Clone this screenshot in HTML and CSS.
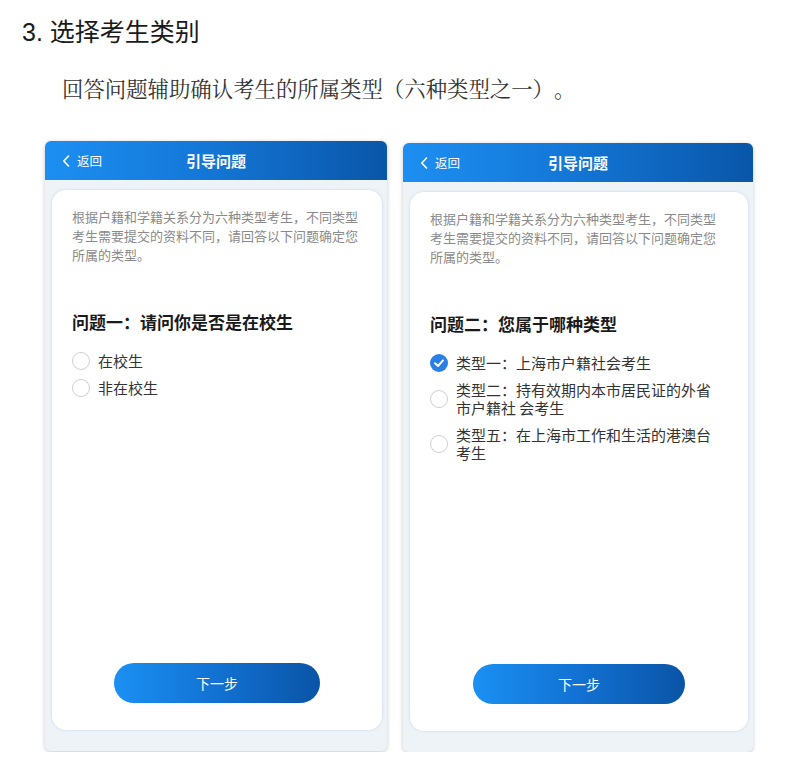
FILE: index.html
```html
<!DOCTYPE html>
<html lang="zh-CN">
<head>
<meta charset="utf-8">
<title>选择考生类别</title>
<link rel="stylesheet" href="styles.css">
</head>
<body>
<h1 class="title">3. 选择考生类别</h1>
<p class="lead">回答问题辅助确认考生的所属类型（六种类型之一）。</p>
<div class="panels">
  <div class="panel">
    <div class="header">
      <span class="back"><svg class="chev" viewBox="0 0 8 12" width="8" height="12"><path d="M6.5 1 L1.8 6 L6.5 11" fill="none" stroke="#fff" stroke-width="1.6" stroke-linecap="round" stroke-linejoin="round"/></svg>返回</span>
      <span class="htitle">引导问题</span>
    </div>
    <div class="card">
      <p class="desc">根据户籍和学籍关系分为六种类型考生，不同类型考生需要提交的资料不同，请回答以下问题确定您所属的类型。</p>
      <h2 class="question">问题一：请问你是否是在校生</h2>
      <ul class="options">
        <li class="option"><span class="radio"></span><span class="otext">在校生</span></li>
        <li class="option"><span class="radio"></span><span class="otext">非在校生</span></li>
      </ul>
      <button class="next">下一步</button>
    </div>
  </div>
  <div class="panel panel-right">
    <div class="header">
      <span class="back"><svg class="chev" viewBox="0 0 8 12" width="8" height="12"><path d="M6.5 1 L1.8 6 L6.5 11" fill="none" stroke="#fff" stroke-width="1.6" stroke-linecap="round" stroke-linejoin="round"/></svg>返回</span>
      <span class="htitle">引导问题</span>
    </div>
    <div class="card">
      <p class="desc">根据户籍和学籍关系分为六种类型考生，不同类型考生需要提交的资料不同，请回答以下问题确定您所属的类型。</p>
      <h2 class="question">问题二：您属于哪种类型</h2>
      <ul class="options">
        <li class="option"><span class="radio checked"><svg viewBox="0 0 18 18" width="18" height="18"><path d="M5 9.2 L8 12 L13 6.4" fill="none" stroke="#fff" stroke-width="2" stroke-linecap="round" stroke-linejoin="round"/></svg></span><span class="otext">类型一：上海市户籍社会考生</span></li>
        <li class="option"><span class="radio"></span><span class="otext">类型二：持有效期内本市居民证的外省市户籍社 会考生</span></li>
        <li class="option"><span class="radio"></span><span class="otext">类型五：在上海市工作和生活的港澳台考生</span></li>
      </ul>
      <button class="next">下一步</button>
    </div>
  </div>
</div>
</body>
</html>
```
FILE: styles.css
```css
* { box-sizing: border-box; }
body {
  margin: 0;
  background: #ffffff;
  font-family: "Liberation Sans", "Noto Sans CJK SC", sans-serif;
  color: #222;
  text-spacing-trim: space-all;
}
.title {
  margin: 0;
  padding: 14px 0 0 22px;
  font-size: 25px;
  line-height: 36px;
  font-weight: normal;
  color: #1a1a1a;
}
.lead {
  margin: 25px 0 0 62px;
  font-family: "Liberation Serif", "Noto Serif CJK SC", "Noto Sans CJK SC", serif;
  font-size: 21.4px;
  line-height: 30px;
  color: #333;
  text-spacing-trim: space-all;
}
.panels {
  display: flex;
  align-items: flex-start;
  gap: 16px;
  margin-top: 36px;
  padding-left: 45px;
}
.panel {
  width: 342px;
  height: 610px;
  background: #eef3f8;
  border-radius: 6px;
  box-shadow: 0 1px 4px rgba(0, 0, 0, 0.22);
  display: flex;
  flex-direction: column;
  overflow: hidden;
}
.panel-right {
  width: 350px;
  height: 609px;
  margin-top: 2px;
}
.header {
  height: 39px;
  flex: none;
  background: linear-gradient(90deg, #1d8ff2 0%, #1478d8 45%, #0a56a8 100%);
  color: #fff;
  display: flex;
  align-items: center;
  position: relative;
  padding-left: 17px;
}
.back {
  display: flex;
  align-items: center;
  gap: 7px;
  font-size: 12.5px;
  font-family: "Noto Sans CJK SC", sans-serif;
}
.chev { display: block; }
.htitle {
  position: absolute;
  left: 0;
  right: 0;
  text-align: center;
  font-size: 15px;
  font-weight: bold;
  font-family: "Noto Sans CJK SC", sans-serif;
  pointer-events: none;
}
.card {
  flex: 1;
  margin: 10px 5px 21px 7px;
  background: #fff;
  border-radius: 14px;
  box-shadow: 0 0 3px rgba(120, 160, 210, 0.35);
  padding: 17px 20px 27px 20px;
  display: flex;
  flex-direction: column;
  font-family: "Noto Sans CJK SC", sans-serif;
}
.desc {
  margin: 0;
  max-width: 288px;
  font-size: 13px;
  line-height: 19px;
  color: #8a8a8a;
}
.question {
  margin: 46px 0 0 0;
  font-size: 17px;
  line-height: 24px;
  font-weight: bold;
  color: #1a1a1a;
}
.options {
  list-style: none;
  margin: 18px 0 0 0;
  padding: 0 12px 0 0;
  display: flex;
  flex-direction: column;
  gap: 9px;
}
.option {
  display: flex;
  align-items: center;
  gap: 8px;
}
.radio {
  flex: none;
  width: 18px;
  height: 18px;
  border-radius: 50%;
  border: 1px solid #cfcfcf;
  background: #fff;
  display: flex;
  align-items: center;
  justify-content: center;
}
.radio.checked {
  border: none;
  background: #2a7fe6;
}
.radio svg { display: block; }
.otext {
  font-size: 15px;
  line-height: 18px;
  color: #333;
}
.next {
  margin: auto auto 0 auto;
  width: 71%;
  height: 40px;
  border: none;
  border-radius: 20px;
  background: linear-gradient(90deg, #1b90f3 0%, #1271d2 50%, #0a54a6 100%);
  color: #fff;
  font-family: "Noto Sans CJK SC", sans-serif;
  font-size: 14px;
}
```
